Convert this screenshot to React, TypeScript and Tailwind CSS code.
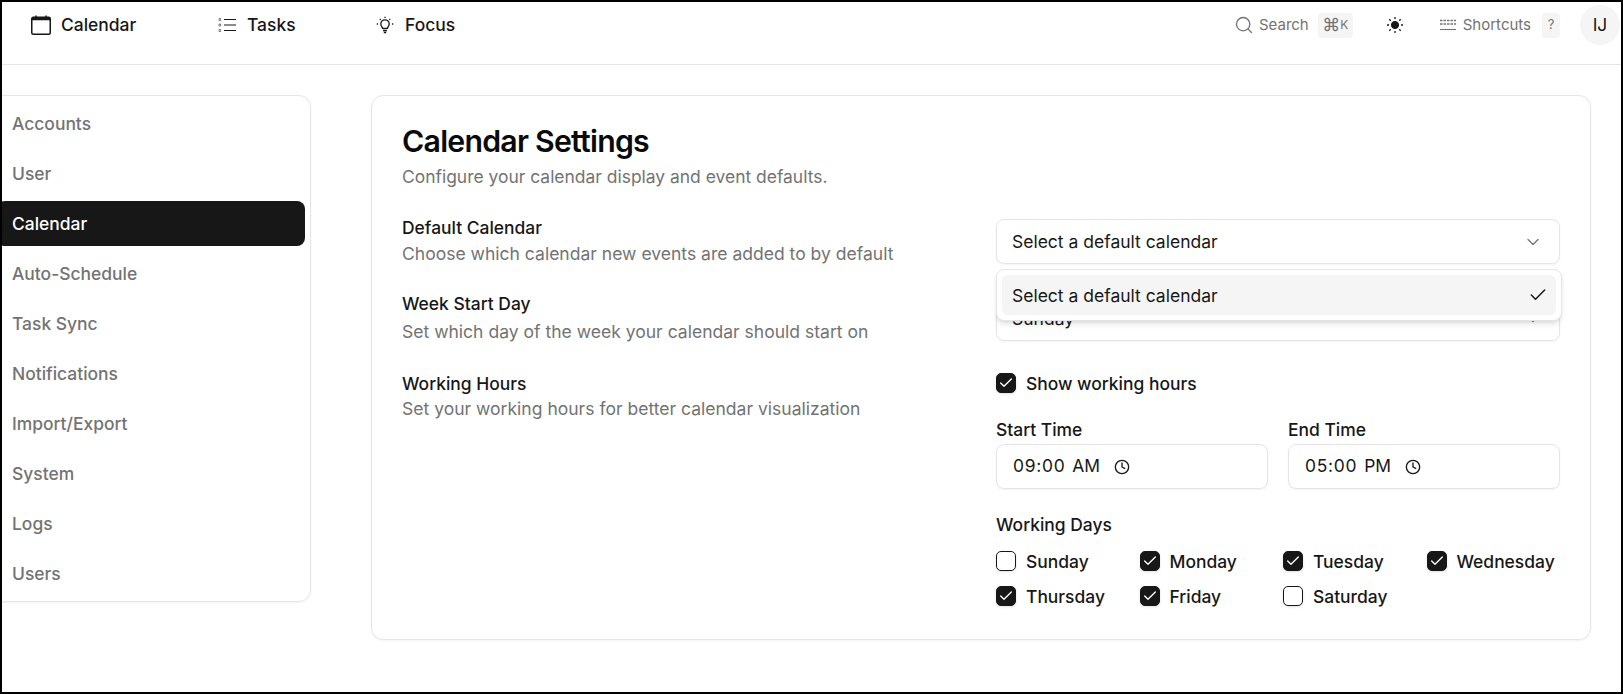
import { Check, ChevronDown, Clock, Search } from "lucide-react";

const font = { fontFamily: "Inter, 'Liberation Sans', sans-serif" };

function Box({ on }: { on: boolean }) {
  return (
    <span
      className={
        "mb-[4px] flex h-5 w-5 shrink-0 items-center justify-center rounded-[5px] border shadow-sm " +
        (on ? "border-[#171717] bg-[#171717]" : "border-[#171717] bg-white")
      }
    >
      {on && <Check className="h-4 w-4 text-white" strokeWidth={2} />}
    </span>
  );
}

function CheckRow({ label, on }: { label: string; on: boolean }) {
  return (
    <div className="flex h-[23px] items-center gap-2.5 text-[17.45px] font-medium text-[#171717]">
      <Box on={on} />
      <span>{label}</span>
    </div>
  );
}

function SettingLabel({ title, desc, cls, descCls }: { title: string; desc: string; cls: string; descCls: string }) {
  return (
    <div className={cls}>
      <div className="text-[17.45px] leading-6 font-medium text-[#171717]">{title}</div>
      <div className={"text-[17.55px] leading-6 text-[#737373] " + descCls}>{desc}</div>
    </div>
  );
}

function TimeField({ label, time, ampm }: { label: string; time: string; ampm: string }) {
  return (
    <div className="flex-1">
      <div className="mb-[2px] text-[17.45px] leading-6 font-medium text-[#171717]">{label}</div>
      <div className="flex h-[45px] items-center rounded-lg border border-[#e5e5e5] pl-[16px] text-[17.45px] text-[#171717] shadow-xs">
        <span className="tracking-[0.7px]">{time}</span>
        <span className="ml-[7px]">{ampm}</span>
        <Clock className="ml-[14px] h-4 w-4" strokeWidth={2} />
      </div>
    </div>
  );
}

const nav = ["Accounts", "User", "Calendar", "Auto-Schedule", "Task Sync", "Notifications", "Import/Export", "System", "Logs", "Users"];
const days: [string, boolean][] = [
  ["Sunday", false], ["Monday", true], ["Tuesday", true], ["Wednesday", true],
  ["Thursday", true], ["Friday", true], ["Saturday", false],
];

export default function App() {
  return (
    <div style={font} className="h-[694px] w-full overflow-hidden border-2 border-black bg-white">
      <header className="flex h-[63px] items-center justify-between border-b border-[#e5e5e5] pb-[16px]">
        <div className="flex items-center pl-[29px] text-[#171717]">
          <div className="flex w-[187px] items-center gap-[10px] text-[17.45px] font-medium">
            <svg width="20" height="20" viewBox="0 0 20 20" fill="none" stroke="#171717" strokeWidth="1.5">
              <rect x="0.75" y="2.25" width="18.5" height="17" rx="1.5" />
              <path d="M1 4.6h18M1 3.8h18M5 0.5v2M15 0.5v2" />
            </svg>
            Calendar
          </div>
          <div className="flex w-[158px] items-center gap-[10px] text-[17.45px] font-medium">
            <svg width="19" height="16" viewBox="0 0 19 16" fill="none" stroke="#171717">
              <path d="M6 2.5h12M6 8h12M6 13.5h12" strokeWidth="1.1" />
              <path d="M1 1.5h1.6v2H1zM1 7h1.6v2H1zM1 12.5h1.6v2H1z" strokeWidth="0.5" />
            </svg>
            Tasks
          </div>
          <div className="flex items-center gap-[11px] text-[17.45px] font-medium">
            <svg width="18" height="18" viewBox="0 0 18 18" fill="none" stroke="#171717" strokeWidth="1.3">
              <path d="M6.6 12.3c0-1.3-1.8-2-1.8-4.3a4.2 4.2 0 0 1 8.4 0c0 2.3-1.8 3-1.8 4.3z" />
              <path d="M7 14.5h4M7.8 16.5h2.4M9 .8v1.2M2 8H.8M17.2 8H16M3.8 3l.9.9M14.2 3l-.9.9" />
            </svg>
            Focus
          </div>
        </div>
        <div className="mr-[1px] flex items-center text-[15px] text-[#737373]">
          <Search className="h-5 w-5" strokeWidth={1.6} />
          <span className="ml-[5px]">Search</span>
          <span className="ml-[9px] flex h-[25px] w-[35px] items-center justify-center rounded bg-[#f5f5f5] text-[12px]">
            <span className="text-[18px] leading-none">⌘</span>K
          </span>
          <svg className="ml-[34px]" width="16" height="16" viewBox="0 0 16 16" fill="#171717" stroke="#171717">
            <circle cx="8" cy="8" r="3.6" />
            <path d="M8 0v2M8 14v2M0 8h2M14 8h2M2.3 2.3l1.4 1.4M12.3 12.3l1.4 1.4M2.3 13.7l1.4-1.4M12.3 3.7l1.4-1.4" strokeWidth="1.3" />
          </svg>
          <svg className="ml-[37px]" width="16" height="14" viewBox="0 0 16 14" fill="none" stroke="#737373">
            <path d="M0 2.5h16M0 6h16" strokeWidth="1.6" strokeDasharray="2.5 1" />
            <path d="M0 11.5h16" strokeWidth="1.1" />
          </svg>
          <span className="ml-[7px]">Shortcuts</span>
          <span className="ml-[11px] flex h-[25px] w-[18px] items-center justify-center rounded bg-[#f5f5f5] text-[13px]">?</span>
          <span className="ml-[20px] flex h-10 w-10 items-center justify-center rounded-full bg-[#f5f5f5] text-[17.45px] text-[#171717]">IJ</span>
        </div>
      </header>

      <main className="flex items-start pt-[30px] pr-[30px]">
        <aside className="-ml-[11px] flex h-[507px] w-[320px] shrink-0 flex-col gap-[5px] rounded-xl border border-[#e5e5e5] px-[5px] py-[5px] shadow-xs">
          {nav.map((n) => (
            <div
              key={n}
              className={
                "flex h-[45px] shrink-0 items-center rounded-lg pt-[2px] pl-[15px] text-[17.45px] font-medium " +
                (n === "Calendar" ? "bg-[#171717] text-white" : "text-[#737373]")
              }
            >
              {n}
            </div>
          ))}
        </aside>

        <section className="ml-[60px] flex h-[545px] flex-1 rounded-xl border border-[#e5e5e5] pt-[27px] pl-[30px] shadow-xs">
          <div className="w-full pr-[30px]">
            <h1 className="text-[30.25px] leading-9 font-semibold tracking-tight text-[#0a0a0a]">Calendar Settings</h1>
            <p className="mt-[6px] text-[17.45px] leading-6 text-[#737373]">Configure your calendar display and event defaults.</p>

            <div className="mt-[30px] flex">
              <div className="w-[594px] shrink-0">
                <SettingLabel cls="-mt-[3px]" descCls="mt-[2px]" title="Default Calendar" desc="Choose which calendar new events are added to by default" />
                <SettingLabel cls="mt-[26px]" descCls="mt-[4px]" title="Week Start Day" desc="Set which day of the week your calendar should start on" />
                <SettingLabel cls="mt-[28px]" descCls="mt-[1px]" title="Working Hours" desc="Set your working hours for better calendar visualization" />
              </div>

              <div className="relative flex-1">
                <div className="flex h-[45px] items-center justify-between rounded-lg border border-[#e5e5e5] pt-[1px] pr-[16px] pl-[15px] text-[17.5px] text-[#171717] shadow-xs">
                  Select a default calendar
                  <ChevronDown className="h-5 w-5 text-[#737373]" strokeWidth={1.5} />
                </div>
                <div className="mt-[33px] flex h-[44px] items-center justify-between rounded-lg border border-[#e5e5e5] pr-[16px] pl-[15px] text-[17.5px] text-[#171717] shadow-xs">
                  Sunday
                  <ChevronDown className="h-5 w-5 text-[#737373]" strokeWidth={1.5} />
                </div>
                <div className="absolute top-[50px] -right-[2px] left-0 z-10 h-[52px] rounded-lg border border-[#e5e5e5] bg-white p-[5px] shadow-md">
                  <div className="flex h-[40px] items-center justify-between rounded-md bg-[#f5f5f5] pt-[2px] pr-[8px] pl-[10px] text-[17.5px] text-[#171717]">
                    Select a default calendar
                    <Check className="-mt-[2px] h-5 w-5" strokeWidth={1.8} />
                  </div>
                </div>

                <div className="mt-[32px]">
                  <CheckRow label="Show working hours" on />
                </div>

                <div className="mt-[22px] flex gap-5">
                  <TimeField label="Start Time" time="09:00" ampm="AM" />
                  <TimeField label="End Time" time="05:00" ampm="PM" />
                </div>

                <div className="mt-[24px] text-[17.45px] leading-6 font-medium text-[#171717]">Working Days</div>
                <div className="mt-[14px] grid grid-cols-4 gap-x-[10px] gap-y-3">
                  {days.map(([d, on]) => (
                    <CheckRow key={d} label={d} on={on} />
                  ))}
                </div>
              </div>
            </div>
          </div>
        </section>
      </main>
    </div>
  );
}
